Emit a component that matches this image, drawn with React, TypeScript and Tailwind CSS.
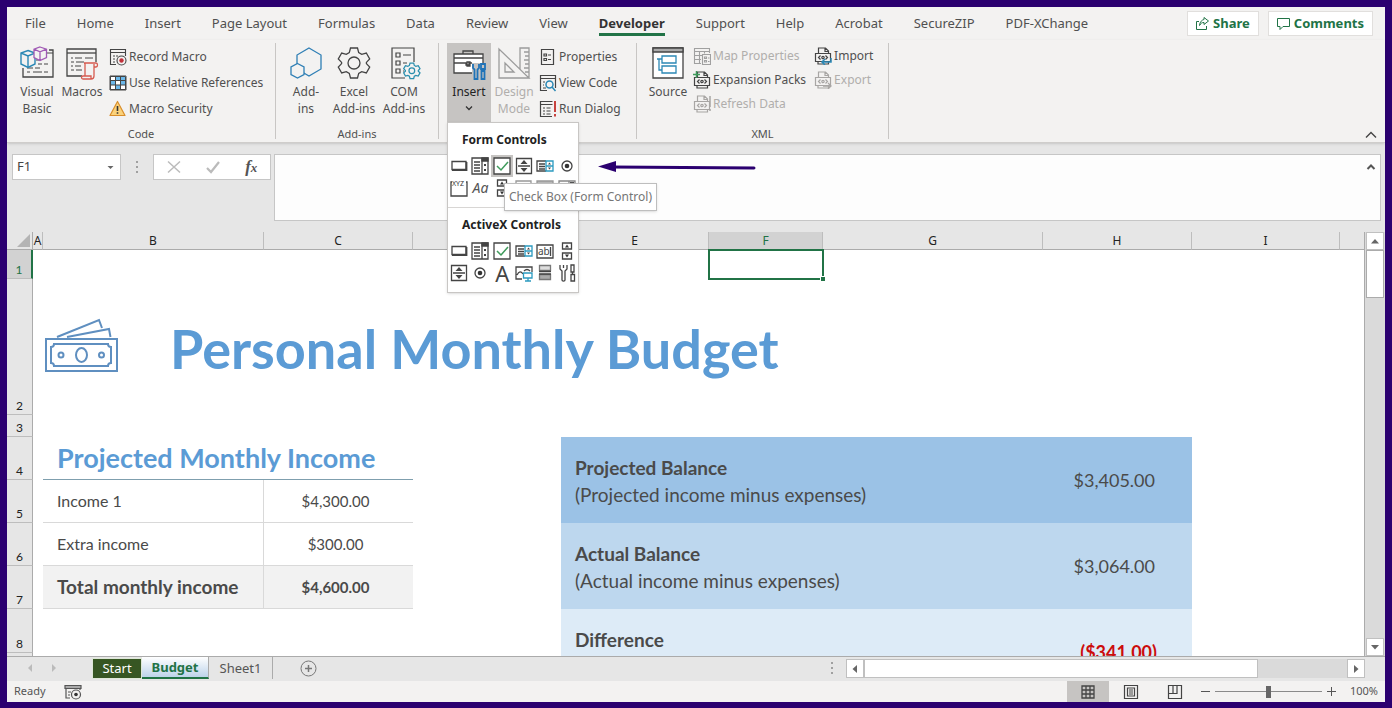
import { useState } from 'react';
import type { ReactNode } from 'react';

const tabs = [
  'File', 'Home', 'Insert', 'Page Layout', 'Formulas', 'Data', 'Review', 'View',
  'Developer', 'Support', 'Help', 'Acrobat', 'SecureZIP', 'PDF-XChange',
];

const columns = [
  { name: 'A', width: 'w-[10px]' },
  { name: 'B', width: 'w-[221px]' },
  { name: 'C', width: 'w-[149px]' },
  { name: 'D', width: 'w-[148px]' },
  { name: 'E', width: 'w-[148px]' },
  { name: 'F', width: 'w-[114px]' },
  { name: 'G', width: 'w-[220px]' },
  { name: 'H', width: 'w-[149px]' },
  { name: 'I', width: 'w-[148px]' },
  { name: '', width: '' },
];

/* ---------- ribbon icons ---------- */

function VisualBasicIcon() {
  return (
    <svg width="34" height="34" viewBox="0 0 34 34" fill="none" stroke="#444">
      <path d="M16 6h1M29 4h4v27H3V22" strokeWidth="1.3" />
      <path d="M27 7h6" strokeWidth="1" />
      <path d="M18 18h4M24 18h4M7 22h6M15 22h5M7 26h3M13 26h9M24 26h4M16 14h3" />
      <path d="M8 4.500l7 2.500v11l-7 3.500-7-3.500v-11zM1 7l7 3 7-3M8 10v11" stroke="#2b88b5" strokeWidth="1.400" fill="#f3f2f1" />
      <path d="M20 1l6.500 2.200v8.300L20 14.500l-6-3V3.200zM14 3.200l6 2.600 6.500-2.600M20 5.800v8.500" stroke="#a05ab5" strokeWidth="1.300" fill="#f3f2f1" />
    </svg>
  );
}

function MacrosIcon() {
  return (
    <svg width="34" height="34" viewBox="0 0 34 34" fill="none" stroke="#444">
      <path d="M17 30H2V3h29v13" strokeWidth="1.300" />
      <path d="M2 7h29" strokeWidth="1.300" />
      <path d="M6 12h2M10 12h7M20 12h8M6 16h3M11 16h8M6 20h2M10 20h6M6 24h3M11 24h6" />
      <path d="M19 17h12c2 0 2 4 0 4h-2v9c0 2-1 3-3 3H18c-2 0-2-3 0-3h2V18c0-1-.5-1-1-1zM29 21v-3M18 30h8v3" stroke="#d65a4f" strokeWidth="1.300" fill="#f3f2f1" />
    </svg>
  );
}

function RecordMacroIcon() {
  return (
    <svg width="18" height="18" viewBox="0 0 18 18" fill="none" stroke="#444" strokeWidth="1.100">
      <path d="M7 16.500H1.500v-15h15V8M1.500 4.500h15" />
      <path d="M4 8h2M7 8h2M4 11h2M4 14h2" />
      <circle cx="12.500" cy="12.500" r="4.500" />
      <circle cx="12.500" cy="12.500" r="2.200" fill="#c0303a" stroke="none" />
    </svg>
  );
}

function RelativeIcon() {
  return (
    <svg width="18" height="18" viewBox="0 0 18 18" fill="none" stroke="#444">
      <path d="M1 2h16v14H1z" fill="#fff" />
      <path d="M7 2h10v4H7zM1 6h5v5H1zM12 6h5v5h-5zM7 11h5v5H7z" fill="#6bb8ea" stroke="none" />
      <path d="M1.500 2.500h15v13h-15zM1.500 6.500h15M1.500 11h15M6.500 2.500v13M11.500 2.500v13" />
    </svg>
  );
}

function SecurityIcon() {
  return (
    <svg width="18" height="18" viewBox="0 0 18 18">
      <path d="M8.500 1.500L16 15.500H1z" fill="#fbd27a" stroke="#d98e2b" strokeWidth="1.200" strokeLinejoin="round" />
      <path d="M8.500 6v5M8.500 12.300v1.500" stroke="#333" strokeWidth="1.600" />
    </svg>
  );
}

function AddinsIcon() {
  return (
    <svg width="34" height="34" viewBox="0 0 34 34" fill="#f3f2f1" stroke="#2f7fb5" strokeWidth="1.300">
      <path d="M20 2l12 7v14l-12 7-12-7V9z" />
      <path d="M8.500 17.500l6.500 3.500v7.500L8.500 32 2 28.500V21z" />
    </svg>
  );
}

const gearPath =
  'M13.500 2h7l1.200 4.600 3 1.700 4.600-1.300 3.400 6-3.300 3.400v1.200l3.300 3.400-3.400 6-4.600-1.300-3 1.700L20.500 32h-7l-1.200-4.600-3-1.700L4.700 27l-3.400-6 3.300-3.400v-1.200L1.300 13l3.400-6 4.600 1.300 3-1.700z';

function ExcelAddinsIcon() {
  return (
    <svg width="34" height="34" viewBox="0 0 34 34" fill="none" stroke="#444" strokeWidth="1.300">
      <path d={gearPath} />
      <circle cx="17" cy="17" r="6" />
    </svg>
  );
}

function ComAddinsIcon() {
  return (
    <svg width="34" height="34" viewBox="0 0 34 34" fill="none" stroke="#444" strokeWidth="1.200">
      <path d="M18 32H5V2h22v14" />
      <path d="M9 7h4v4H9zM9 15h4v4H9zM9 23h4v4H9zM16 9h8M16 17h4M16 25h1" />
      <g transform="translate(16 16) scale(.52)" stroke="#2b8fae" strokeWidth="2.400" fill="#f3f2f1">
        <path d={gearPath} />
        <circle cx="17" cy="17" r="5.500" />
      </g>
    </svg>
  );
}

function ToolboxIcon() {
  return (
    <svg width="34" height="34" viewBox="0 0 34 34" fill="none" stroke="#444" strokeWidth="1.300">
      <path d="M20 27H2V8h29v9H20z" fill="#fff" stroke="none" />
      <path d="M20 27H2V8h29v10M11 8V5h10v3M2 12h29" />
      <path d="M2 17h12v2h3v-2h3M15 16h3v4h-3z" />
      <path d="M21 18v4l1.500 1.500V33h3v-9.500L27 22v-4M29 18h4v5h-4zM29.500 25h3v8h-3zM31 23v2" stroke="#1f73b8" strokeWidth="1.800" />
    </svg>
  );
}

function DesignIcon() {
  return (
    <svg width="34" height="34" viewBox="0 0 34 34" fill="none" stroke="#9c9c9c" strokeWidth="1.300">
      <path d="M23 23V2h9v30M32 32H2V3zM8 17v9h9zM27 6h5M28 10h4M27 14h5M28 18h4M27 22h5M28 26h4" />
    </svg>
  );
}

function PropertiesIcon() {
  return (
    <svg width="18" height="18" viewBox="0 0 18 18" fill="none" stroke="#444" strokeWidth="1.200">
      <path d="M2.500 1.500h12v15h-12z" />
      <path d="M5 6h2.500v2H5zM9 7h3M5 10.500h2.500v2H5zM9 11.500h3" />
    </svg>
  );
}

function ViewCodeIcon() {
  return (
    <svg width="18" height="18" viewBox="0 0 18 18" fill="none" stroke="#444" strokeWidth="1.200">
      <path d="M8 16.500H1.500v-15h15V14M1.500 4.500h15M4 8h2M4 11h1M4 14h3" />
      <circle cx="10.500" cy="10.500" r="3.500" stroke="#2b88b5" strokeWidth="1.500" />
      <path d="M13 13l3.500 4" stroke="#2b88b5" strokeWidth="1.500" />
    </svg>
  );
}

function RunDialogIcon() {
  return (
    <svg width="18" height="18" viewBox="0 0 18 18" fill="none" stroke="#444" strokeWidth="1.200">
      <path d="M13 16.500H1.500v-15h12M1.500 4.500h12M4 8h2M7.500 8h4M4 11h2M7.500 11h4M4 14h2M7.500 14h4" />
      <path d="M16 1v11M16 14v2.500" stroke="#c8433f" strokeWidth="2" />
    </svg>
  );
}

function SourceIcon() {
  return (
    <svg width="34" height="34" viewBox="0 0 34 34" fill="none" stroke="#444" strokeWidth="1.300">
      <path d="M2 2h30v30H2z" fill="#fff" />
      <path d="M2 2h30v4H2z" fill="#aaa" />
      <path d="M6 13h5M8 13v11h3M11 10h14v7H11zM11 20h14v7H11z" stroke="#2b88b5" />
    </svg>
  );
}

function MapIcon() {
  return (
    <svg width="18" height="18" viewBox="0 0 18 18" fill="none" stroke="#a0a0a0" strokeWidth="1.100">
      <path d="M8 16.500H1.500v-15h15V6M1.500 4.500h15M1.500 8.500H9M1.500 12.500H8M6.500 4.500v12M11.500 4.500v2" />
      <path d="M9.500 7.500h8v10h-8zM11.500 10h2v1.500h-2zM15 11h1.500M11.500 13.500h2V15h-2zM15 14.500h1.500" />
    </svg>
  );
}

interface XmlIconProps {
  color: string;
  children?: ReactNode;
}

// Page with an <o> badge on it, shared by the four XML file commands
function XmlIcon({ color, children }: XmlIconProps) {
  return (
    <svg width="18" height="18" viewBox="0 0 18 18" fill="none" stroke={color} strokeWidth="1.200">
      <path d="M4.500 6V1h7l3 3v2M11 1v3.500h3.500" />
      <path d="M1.500 6.500h15v8h-15zM4 14.500V17h10.500v-2" />
      <path d="M6.500 8.500L4.500 10.500l2 2M11.500 8.500l2 2-2 2" />
      <circle cx="9" cy="10.500" r="1.200" />
      {children}
    </svg>
  );
}

/* ---------- toolbox glyphs ---------- */

function Glyph({ children }: { children: ReactNode }) {
  return (
    <svg width="20" height="20" viewBox="0 0 20 20" fill="none" stroke="#444" strokeWidth="1.300">
      {children}
    </svg>
  );
}

const glyphs: Record<string, ReactNode> = {
  Button: (
    <Glyph>
      <path d="M3 5.500h14v8H3z" />
      <path d="M3 14h14.500V6" strokeWidth="1.800" />
    </Glyph>
  ),
  'Combo Box': (
    <Glyph>
      <path d="M2 2h16v16H2zM12 2v16M4 6h6M4 9h6M4 12h6M4 15h6" />
      <path d="M12 2h6v3h-6z" fill="#444" />
      <path d="M15 8v2M15 13v2" strokeWidth="2" />
    </Glyph>
  ),
  'Check Box': (
    <Glyph>
      <path d="M2 2h16v16H2z" fill="#fff" />
      <path d="M5 10l4 4 7-8" stroke="#3f9b5c" strokeWidth="1.500" />
    </Glyph>
  ),
  'Spin Button': (
    <Glyph>
      <path d="M2.500 2.500h15v15h-15zM4 10h12" />
      <path d="M10 4l3.500 4h-7zM10 16L6.500 12h7z" fill="#444" stroke="none" />
    </Glyph>
  ),
  'List Box': (
    <Glyph>
      <path d="M11 15H2V5h9M4 8h6M4 10.500h6M4 13h6" />
      <path d="M11 5h7v10h-7zM11 10h7" stroke="#2b9ac0" />
      <path d="M14.500 6.500l1.500 2h-3zM14.500 13.500l1.500-2h-3z" fill="#444" stroke="none" />
    </Glyph>
  ),
  'Option Button': (
    <Glyph>
      <circle cx="10" cy="10" r="5" />
      <circle cx="10" cy="10" r="2.300" fill="#333" stroke="none" />
    </Glyph>
  ),
  'Group Box': (
    <Glyph>
      <path d="M3 4H2v14h16V4h-1" />
      <text x="3" y="8" fontSize="7" fontFamily="Noto Sans, sans-serif" fill="#333" stroke="none">XYZ</text>
    </Glyph>
  ),
  Label: <span className="text-[14px] leading-5 italic text-[#555]">Aa</span>,
  'Scroll Bar': (
    <Glyph>
      <path d="M5.500 2h9v6h-9zM5.500 12h9v6h-9z" />
      <path d="M10 3.500l2 3H8zM10 16.500l-2-3h4z" fill="#333" stroke="none" />
    </Glyph>
  ),
  'Text Field': (
    <Glyph>
      <path d="M2 3h15v13H2z" stroke="#999" />
    </Glyph>
  ),
  'Combo List': (
    <Glyph>
      <path d="M2 3h16v13H2z" fill="#bbb" stroke="#999" />
    </Glyph>
  ),
  'Combo Drop-Down': (
    <Glyph>
      <path d="M2 3h16v13H2zM12 3v6" stroke="#888" />
      <path d="M13 4h4v3h-4z" fill="#555" stroke="none" />
    </Glyph>
  ),
  'Text Box': (
    <Glyph>
      <path d="M2 4h16v13H2z" />
      <text x="3" y="14" fontSize="10" fontFamily="Noto Sans, sans-serif" fill="#444" stroke="none">ab</text>
      <path d="M15.500 6v9" />
    </Glyph>
  ),
  'ActiveX Label': <span className="text-[22px] leading-5 text-[#444]">A</span>,
  Image: (
    <Glyph>
      <path d="M8 16H2V4h16v5M3 12c2-4 4-4 6-1M10 8c2-2 4-2 6 0" />
      <path d="M9.500 10h8.500v5H9.500zM14 15v3M11 18h6" stroke="#2b9ac0" fill="#fff" />
    </Glyph>
  ),
  'Toggle Button': (
    <Glyph>
      <path d="M4.500 2.500h11v5h-11z" fill="#ddd" stroke="#777" />
      <path d="M4.500 11.500h11v5h-11z" fill="#aaa" stroke="#777" />
      <path d="M4 8.500h12M4 11h12" strokeWidth="1.500" />
    </Glyph>
  ),
  'More Controls': (
    <Glyph>
      <path d="M3 2v4l2 2v9c0 1.500 3 1.500 3 0V8l2-2V2M6.500 2v3" />
      <path d="M14 2h3v7h-3zM14 11.500h3.500V18H14zM15.500 9v2.500" />
    </Glyph>
  ),
};

const formControls = [
  'Button', 'Combo Box', 'Check Box', 'Spin Button', 'List Box', 'Option Button',
  'Group Box', 'Label', 'Scroll Bar', 'Text Field', 'Combo List', 'Combo Drop-Down',
];

const activeXControls = [
  'Button', 'Combo Box', 'Check Box', 'List Box', 'Text Box', 'Scroll Bar',
  'Spin Button', 'Option Button', 'ActiveX Label', 'Image', 'Toggle Button', 'More Controls',
];

/* ---------- ribbon pieces ---------- */

interface BigButtonProps {
  icon: ReactNode;
  lines: string[];
  width: string;
  disabled?: boolean;
  active?: boolean;
}

function BigButton({ icon, lines, width, disabled, active }: BigButtonProps) {
  return (
    <button
      disabled={disabled}
      className={`${width} flex h-20 flex-col items-center pt-[3px] leading-[17px] ${
        disabled ? 'text-[#b0aeac]' : ''
      } ${active ? 'bg-[#c6c4c2] text-[#222]' : ''}`}
    >
      {icon}
      <span className="mt-[3px] whitespace-nowrap">{lines[0]}</span>
      {lines[1] && <span className="whitespace-nowrap">{lines[1]}</span>}
      {active && (
        <svg className="mt-1" width="8" height="8" viewBox="0 0 8 8" fill="none" stroke="#333" strokeWidth="1.300">
          <path d="M1 2.500l3 3 3-3" />
        </svg>
      )}
    </button>
  );
}

interface SmallButtonProps {
  icon: ReactNode;
  label: string;
  disabled?: boolean;
  compact?: boolean;
}

function SmallButton({ icon, label, disabled, compact }: SmallButtonProps) {
  return (
    <button
      disabled={disabled}
      className={`flex items-center gap-0.5 whitespace-nowrap ${compact ? 'h-6' : 'h-[26px]'} ${
        disabled ? 'text-[#b0aeac]' : ''
      }`}
    >
      {icon}
      {label}
    </button>
  );
}

interface GroupProps {
  title: string;
  width: string;
  children: ReactNode;
}

function Group({ title, width, children }: GroupProps) {
  return (
    <section aria-label={title || 'Controls'} className={`${width} flex h-24 shrink-0 flex-col border-r border-[#c8c6c4]`}>
      <div className="flex">{children}</div>
      <div className="mt-auto text-center text-[11px] leading-[10px]">{title}</div>
    </section>
  );
}

function ControlGrid({ items, hovered }: { items: string[]; hovered?: string }) {
  return (
    <div className="grid grid-cols-6">
      {items.map((item) => (
        <button
          key={item}
          aria-label={item}
          className={`flex h-[22px] items-center justify-center ${
            item === hovered ? 'bg-[#c6c4c2]' : ''
          }`}
        >
          {glyphs[item]}
        </button>
      ))}
    </div>
  );
}

function InsertMenu() {
  return (
    <div className="absolute top-[79px] left-0 z-20 w-[132px] border border-[#c8c6c4] bg-white shadow-sm">
      <h2 className="pt-1.5 pb-1 pl-3.5 text-[12px] leading-[22px] font-bold whitespace-nowrap text-[#222]">Form Controls</h2>
      <ControlGrid items={formControls} hovered="Check Box" />
      <h2 className="mt-2 border-t border-[#d8d6d4] pt-1.5 pb-1 pl-3.5 text-[12px] leading-[22px] font-bold whitespace-nowrap text-[#222]">
        ActiveX Controls
      </h2>
      <ControlGrid items={activeXControls} />
      <div className="h-2" />
      <div
        role="tooltip"
        className="absolute top-[60px] left-14 z-30 border border-[#bebebe] bg-white px-1 text-[12px] leading-[26px] whitespace-nowrap text-[#767676] shadow-sm"
      >
        Check Box (Form Control)
      </div>
      <svg className="absolute top-9 left-[150px]" width="158" height="16" viewBox="0 0 158 16">
        <path d="M14 8L156 9" stroke="#2b0070" strokeWidth="3" strokeLinecap="round" />
        <path d="M0 7.500L18 2v11z" fill="#2b0070" />
      </svg>
    </div>
  );
}

function Ribbon() {
  return (
    <div className="relative z-10 flex h-[103px] border-b border-[#cfcdcb] bg-[#f3f2f1] pt-[3px] text-[12px] text-[#505050] shadow">
      <Group title="Code" width="w-[269px]">
        <div className="w-2" />
        <BigButton icon={<VisualBasicIcon />} lines={['Visual', 'Basic']} width="w-11" />
        <BigButton icon={<MacrosIcon />} lines={['Macros']} width="w-[46px]" />
        <div className="flex flex-col pt-px pl-1">
          <SmallButton icon={<RecordMacroIcon />} label="Record Macro" />
          <SmallButton icon={<RelativeIcon />} label="Use Relative References" />
          <SmallButton icon={<SecurityIcon />} label="Macro Security" />
        </div>
      </Group>
      <Group title="Add-ins" width="w-[163px]">
        <div className="w-1.5" />
        <BigButton icon={<AddinsIcon />} lines={['Add-', 'ins']} width="w-12" />
        <BigButton icon={<ExcelAddinsIcon />} lines={['Excel', 'Add-ins']} width="w-12" />
        <BigButton icon={<ComAddinsIcon />} lines={['COM', 'Add-ins']} width="w-[52px]" />
      </Group>
      <Group title="" width="w-[198px]">
        <div className="w-2" />
        <div className="relative">
          <BigButton icon={<ToolboxIcon />} lines={['Insert']} width="w-11" active />
          <InsertMenu />
        </div>
        <BigButton icon={<DesignIcon />} lines={['Design', 'Mode']} width="w-[46px]" disabled />
        <div className="flex flex-col pt-px pl-0.5">
          <SmallButton icon={<PropertiesIcon />} label="Properties" />
          <SmallButton icon={<ViewCodeIcon />} label="View Code" />
          <SmallButton icon={<RunDialogIcon />} label="Run Dialog" />
        </div>
      </Group>
      <Group title="XML" width="w-[252px]">
        <div className="w-2" />
        <BigButton icon={<SourceIcon />} lines={['Source']} width="w-[46px]" />
        <div className="flex flex-col pt-px pl-0.5">
          <SmallButton compact disabled icon={<MapIcon />} label="Map Properties" />
          <SmallButton
            compact
            icon={
              <XmlIcon color="#444">
                <path d="M0 3.500h7M3.500 0v7" stroke="#3f9b5c" strokeWidth="1.500" />
              </XmlIcon>
            }
            label="Expansion Packs"
          />
          <SmallButton
            compact
            disabled
            icon={
              <XmlIcon color="#a8a6a4">
                <path d="M17 1v11M17 14v2" strokeWidth="1.500" />
              </XmlIcon>
            }
            label="Refresh Data"
          />
        </div>
        <div className="flex flex-col pt-px pl-2">
          <SmallButton
            compact
            icon={
              <XmlIcon color="#444">
                <path d="M17 11v4H8M11 12l-3 3 3 3" stroke="#2b88b5" strokeWidth="1.500" />
              </XmlIcon>
            }
            label="Import"
          />
          <SmallButton
            compact
            disabled
            icon={
              <XmlIcon color="#a8a6a4">
                <path d="M9 15h8M14 12l3 3-3 3" strokeWidth="1.300" />
              </XmlIcon>
            }
            label="Export"
          />
        </div>
      </Group>
      <button aria-label="Collapse the Ribbon" className="mt-auto mr-2 mb-[3px] ml-auto">
        <svg width="12" height="8" viewBox="0 0 12 8" fill="none" stroke="#444" strokeWidth="1.400">
          <path d="M1 6.500l5-5 5 5" />
        </svg>
      </button>
    </div>
  );
}

/* ---------- formula bar ---------- */

function Dots() {
  return (
    <svg width="4" height="14" viewBox="0 0 4 14" fill="#a0a0a0">
      <path d="M1 1h2v2H1zM1 6h2v2H1zM1 11h2v2H1z" />
    </svg>
  );
}

function FormulaBar() {
  const [cell, setCell] = useState('F1');
  const [formula, setFormula] = useState('');

  return (
    <div className="flex h-[89px] shrink-0 bg-[#e6e6e6] pt-[11px] pr-1 pl-[5px]">
      <div className="flex h-[26px] w-[109px] items-center border border-[#c6c6c6] bg-white">
        <input
          aria-label="Name Box"
          value={cell}
          onChange={(e) => setCell(e.target.value)}
          className="w-0 flex-1 pl-1 text-[13px] text-[#444] outline-none"
        />
        <button aria-label="Show names" className="px-1.5">
          <svg width="7" height="5" viewBox="0 0 7 5" fill="#666">
            <path d="M.5 1h6l-3 3z" />
          </svg>
        </button>
      </div>
      <div className="flex h-[26px] w-8 items-center justify-center">
        <Dots />
      </div>
      <div className="flex h-[26px] w-[118px] items-center justify-around border border-[#c6c6c6] bg-white">
        <button aria-label="Cancel">
          <svg width="14" height="14" viewBox="0 0 14 14" fill="none" stroke="#bbb" strokeWidth="1.500">
            <path d="M1 1.500l12 11M13 1.500l-12 11" />
          </svg>
        </button>
        <button aria-label="Enter">
          <svg width="14" height="14" viewBox="0 0 14 14" fill="none" stroke="#bbb" strokeWidth="2.200">
            <path d="M1 8l4 4 8-10" />
          </svg>
        </button>
        <button aria-label="Insert Function" className="font-['Liberation_Serif',serif] text-[17px] leading-5 font-bold text-[#555] italic">
          f<span className="text-[13px]">x</span>
        </button>
      </div>
      <div className="ml-[3px] flex h-[67px] flex-1 border border-[#c6c6c6] bg-[#fdfdfd]">
        <textarea
          aria-label="Formula Bar"
          value={formula}
          onChange={(e) => setFormula(e.target.value)}
          className="flex-1 resize-none px-2 py-1 outline-none"
        />
        <button aria-label="Collapse Formula Bar" className="mt-2 mr-1 self-start">
          <svg width="10" height="8" viewBox="0 0 10 8" fill="none" stroke="#555" strokeWidth="2">
            <path d="M1.500 6L5 2.500 8.500 6" />
          </svg>
        </button>
      </div>
    </div>
  );
}

/* ---------- worksheet ---------- */

function MoneyIcon() {
  return (
    <svg width="76" height="58" viewBox="0 0 76 58" fill="none" stroke="#5f8fc0" strokeWidth="2">
      <path d="M3 24h71v32H3z" />
      <path d="M11 29h54q0 3 3 3v16q-3 0-3 3H11q0-3-3-3V32q3 0 3-3z" />
      <ellipse cx="38.500" cy="40" rx="5.500" ry="7" />
      <circle cx="18" cy="40" r="2.500" />
      <circle cx="58.500" cy="40" r="2.500" />
      <path d="M14 22L56 5l3 8M24 22l42-8 1.500 8" />
    </svg>
  );
}

function RowHead({ n, height, selected }: { n?: number; height: string; selected?: boolean }) {
  return (
    <th
      scope="row"
      className={`${height} border-r border-b border-b-[#bdbdbd] p-0 text-center align-bottom text-[12px] leading-4 font-normal ${
        selected ? 'border-r-2 border-r-[#217346] bg-[#d2d2d2] text-[#217346]' : 'border-r-[#ababab] bg-[#e6e6e6] text-[#222]'
      }`}
    >
      {n}
    </th>
  );
}

function Balance({ title, note, color }: { title: string; note?: string; color: string }) {
  return (
    <td colSpan={3} rowSpan={2} className={`${color} h-[86px] p-0 pl-3.5 align-top`}>
      <div className="pt-[17px] text-[19px] leading-[27px]">
        <strong className="block">{title}</strong>
        {note}
      </div>
    </td>
  );
}

function Worksheet() {
  return (
    <div className="min-w-0 flex-1 overflow-hidden bg-white">
      <table className="w-full table-fixed border-separate border-spacing-0 font-['Lato',sans-serif] text-[#4a4a4a]">
        <thead>
          <tr className="h-[18px] bg-[#e6e6e6] font-['Noto_Sans',sans-serif] text-[12px] leading-4 text-[#222]">
            <th aria-label="Select all" className="w-[26px] border-r border-b border-[#ababab] p-0 pr-0.5">
              <svg className="ml-auto" width="13" height="13" viewBox="0 0 13 13" fill="#b4b4b4">
                <path d="M13 0v13H0z" />
              </svg>
            </th>
            {columns.map((col) => (
              <th
                key={col.name}
                scope="col"
                className={`${col.width} border-b p-0 font-normal ${
                  col.name === 'F'
                    ? 'border-b-[#217346] bg-[#d2d2d2] text-[#217346]'
                    : 'border-b-[#ababab]'
                } ${col.name ? 'border-r border-r-[#bdbdbd]' : ''}`}
              >
                {col.name}
              </th>
            ))}
          </tr>
        </thead>
        <tbody>
          <tr>
            <RowHead n={1} height="h-[29px]" selected />
            <td colSpan={5} />
            <td className="relative p-0">
              <div className="absolute -inset-px border-2 border-[#217346]">
                <div className="absolute -right-[3px] -bottom-[3px] size-[5px] border-t border-l border-white bg-[#217346]" />
              </div>
            </td>
            <td colSpan={4} />
          </tr>
          <tr>
            <RowHead n={2} height="h-[136px]" />
            <td colSpan={10} className="p-0 align-top">
              <div className="flex items-start gap-[51px] pt-9 pl-2.5">
                <MoneyIcon />
                <h1 className="text-[54px] leading-[68px] font-bold whitespace-nowrap text-[#5b9bd5]">Personal Monthly Budget</h1>
              </div>
            </td>
          </tr>
          <tr>
            <RowHead n={3} height="h-[22px]" />
            <td colSpan={10} />
          </tr>
          <tr>
            <RowHead n={4} height="h-[43px]" />
            <td />
            <td colSpan={2} className="border-b border-[#7f9fae] p-0 pl-3.5">
              <h2 className="text-[27px] leading-8 font-bold whitespace-nowrap text-[#5b9bd5]">Projected Monthly Income</h2>
            </td>
            <td />
            <Balance title="Projected Balance" note="(Projected income minus expenses)" color="bg-[#9bc2e6]" />
            <td rowSpan={2} className="bg-[#9bc2e6] pr-[37px] text-right text-[18px]">$3,405.00</td>
            <td colSpan={2} />
          </tr>
          <tr>
            <RowHead n={5} height="h-[43px]" />
            <td />
            <td className="border-r border-b border-[#d9d9d9] p-0 pl-3.5 text-[16px]">Income 1</td>
            <td className="border-b border-[#d9d9d9] p-0 pr-1.5 text-center text-[15px]">$4,300.00</td>
            <td />
            <td colSpan={2} />
          </tr>
          <tr>
            <RowHead n={6} height="h-[43px]" />
            <td />
            <td className="border-r border-b border-[#d9d9d9] p-0 pl-3.5 text-[16px]">Extra income</td>
            <td className="border-b border-[#d9d9d9] p-0 pr-1.5 text-center text-[15px]">$300.00</td>
            <td />
            <Balance title="Actual Balance" note="(Actual income minus expenses)" color="bg-[#bdd7ee]" />
            <td rowSpan={2} className="bg-[#bdd7ee] pr-[37px] text-right text-[18px]">$3,064.00</td>
            <td colSpan={2} />
          </tr>
          <tr className="font-bold">
            <RowHead n={7} height="h-[43px]" />
            <td />
            <td className="border-r border-b border-[#d9d9d9] bg-[#f2f2f2] p-0 pl-3.5 text-[19px] whitespace-nowrap">Total monthly income</td>
            <td className="border-b border-[#d9d9d9] bg-[#f2f2f2] p-0 pr-1.5 text-center text-[15px]">$4,600.00</td>
            <td />
            <td colSpan={2} />
          </tr>
          <tr>
            <RowHead n={8} height="h-[44px]" />
            <td colSpan={4} />
            <Balance title="Difference" color="bg-[#ddebf7]" />
            <td rowSpan={2} className="bg-[#ddebf7] pr-[35px] text-right text-[18px] font-bold text-[#cc0c0c]">($341.00)</td>
            <td colSpan={2} />
          </tr>
          <tr>
            <RowHead height="h-[42px]" />
            <td colSpan={4} />
            <td colSpan={2} />
          </tr>
        </tbody>
      </table>
    </div>
  );
}

function ScrollArrow({ label, d, className }: { label: string; d: string; className: string }) {
  return (
    <button aria-label={label} className={`${className} flex shrink-0 items-center justify-center border border-[#c0c0c0] bg-white`}>
      <svg width="10" height="10" viewBox="0 0 10 10" fill="#666">
        <path d={d} />
      </svg>
    </button>
  );
}

function VerticalScroll() {
  return (
    <div className="flex w-[21px] flex-col border-l border-[#ababab] bg-[#dadada] px-px">
      <ScrollArrow label="Scroll up" d="M5 3l4 4.500H1z" className="h-[18px]" />
      <div className="h-12 border border-[#ababab] bg-white" />
      <ScrollArrow label="Scroll down" d="M5 7.500L1 3h8z" className="mt-auto h-[18px]" />
    </div>
  );
}

function SheetTabs() {
  return (
    <div className="flex h-[25px] shrink-0 items-start border-t border-[#ababab] bg-[#e6e6e6] text-[13px]">
      <div className="flex h-[22px] w-[85px] items-center gap-4 pl-[19px]">
        <button aria-label="Previous sheet">
          <svg width="8" height="8" viewBox="0 0 8 8" fill="#bbb"><path d="M6 0v8L2 4z" /></svg>
        </button>
        <button aria-label="Next sheet">
          <svg width="8" height="8" viewBox="0 0 8 8" fill="#bbb"><path d="M2 0v8l4-4z" /></svg>
        </button>
      </div>
      <button className="mt-px h-[21px] w-[50px] border border-[#dfe8d8] bg-[#375623] leading-[17px] text-white">Start</button>
      <button className="h-[22px] w-[67px] border-r border-b-2 border-r-[#ababab] border-b-[#217346] bg-linear-to-b from-white to-[#bdd3ea] leading-5 font-bold text-[#217346]">
        Budget
      </button>
      <button className="h-[22px] w-16 border-r border-[#ababab] leading-5 text-[#555]">Sheet1</button>
      <button aria-label="New sheet" className="mt-[3px] ml-[27px]">
        <svg width="17" height="17" viewBox="0 0 17 17" fill="none" stroke="#777">
          <circle cx="8.500" cy="8.500" r="7.500" />
          <path d="M5 8.500h7M8.500 5v7" strokeWidth="1.500" />
        </svg>
      </button>
      <div className="mt-1 mr-3 ml-auto">
        <Dots />
      </div>
      <div className="mt-0.5 mr-5 flex h-[19px] w-[37.7%] bg-[#dadada]">
        <ScrollArrow label="Scroll left" d="M7 1v8L2.500 5z" className="w-[18px]" />
        <div className="w-[76%] border border-[#c0c0c0] bg-white" />
        <ScrollArrow label="Scroll right" d="M3 1v8l4.500-4z" className="ml-auto w-[18px]" />
      </div>
    </div>
  );
}

function StatusBar() {
  const [zoom, setZoom] = useState(100);

  return (
    <div className="flex h-[21px] shrink-0 items-center bg-[#f3f2f1] text-[11px] text-[#555]">
      <span className="pl-[7px]">Ready</span>
      <button aria-label="Record macro" className="ml-[18px]">
        <svg width="18" height="16" viewBox="0 0 18 16" fill="none" stroke="#555" strokeWidth="1.200">
          <path d="M6 14H2V2h14v4M4 8h3M4 11h2" />
          <path d="M1 1.500h16v3H1z" fill="#aaa" />
          <circle cx="12" cy="10.500" r="4.500" fill="#f3f2f1" />
          <circle cx="12" cy="10.500" r="1.800" fill="#333" stroke="none" />
        </svg>
      </button>
      <div className="ml-auto flex h-full">
        <button aria-label="Normal" className="flex w-[42px] items-center justify-center bg-[#c6c4c2]">
          <svg width="16" height="16" viewBox="0 0 16 16" fill="none" stroke="#444" strokeWidth="1.300">
            <path d="M2 2h12v12H2zM2 6h12M2 10h12M6 2v12M10 2v12" />
          </svg>
        </button>
        <button aria-label="Page Layout" className="flex w-11 items-center justify-center">
          <svg width="16" height="16" viewBox="0 0 16 16" fill="none" stroke="#444" strokeWidth="1.200">
            <path d="M1.500 1.500h13v13h-13zM4.500 4h7v8h-7zM6 6h4M6 8h4M6 10h4" />
          </svg>
        </button>
        <button aria-label="Page Break Preview" className="flex w-11 items-center justify-center">
          <svg width="16" height="16" viewBox="0 0 16 16" fill="none" stroke="#444" strokeWidth="1.200">
            <path d="M1.500 1.500h13v13h-13zM1.500 9.500H10v-8M6 1.500v8" />
          </svg>
        </button>
      </div>
      <button aria-label="Zoom out" className="ml-1" onClick={() => setZoom(zoom - 10)}>
        <svg width="9" height="9" viewBox="0 0 9 9" stroke="#555"><path d="M0 4.500h9" /></svg>
      </button>
      <input
        type="range"
        aria-label="Zoom"
        min={0}
        max={200}
        value={zoom}
        onChange={(e) => setZoom(Number(e.target.value))}
        className="mx-[5px] h-px w-[107px] appearance-none bg-[#8a8a8a] [&::-webkit-slider-thumb]:h-3 [&::-webkit-slider-thumb]:w-[5px] [&::-webkit-slider-thumb]:appearance-none [&::-webkit-slider-thumb]:bg-[#666]"
      />
      <button aria-label="Zoom in" onClick={() => setZoom(zoom + 10)}>
        <svg width="9" height="9" viewBox="0 0 9 9" stroke="#555"><path d="M0 4.500h9M4.500 0v9" /></svg>
      </button>
      <span className="ml-3.5 pr-[7px]">{zoom}%</span>
    </div>
  );
}

export default function App() {
  return (
    <div className="h-screen overflow-hidden bg-[#2b0070] px-[7px] pt-[7px] pb-1.5 font-['Noto_Sans','Open_Sans',sans-serif]">
      <div className="flex h-full flex-col">
        <header className="flex h-[33px] shrink-0 items-center bg-[#f3f2f1] pr-3 pl-[18px] text-[13px] text-[#505050]">
          <nav className="flex gap-[31px] whitespace-nowrap">
            {tabs.map((tab) => (
              <button
                key={tab}
                className={
                  tab === 'Developer'
                    ? 'border-b-[3px] border-[#217346] pt-[3px] font-bold text-[#333]'
                    : ''
                }
              >
                {tab}
              </button>
            ))}
          </nav>
          <div className="ml-auto flex gap-[9px] font-bold text-[#217346]">
            <button className="flex h-[25px] items-center gap-1 border border-[#e1dfdd] bg-white px-2">
              <svg width="13" height="13" viewBox="0 0 13 13" fill="none" stroke="#217346">
                <path d="M3 4.500H.5v8h10V9M8 .500L12.500 4 8 7.500V5.500C6 5.500 5 6 3.500 8.500 4 4.500 6 3 8 2.500z" />
              </svg>
              Share
            </button>
            <button className="flex h-[25px] items-center gap-1 border border-[#e1dfdd] bg-white px-2">
              <svg width="13" height="13" viewBox="0 0 13 13" fill="none" stroke="#217346">
                <path d="M.500 1.500h12v8H6l-3 3v-3H.500z" />
              </svg>
              Comments
            </button>
          </div>
        </header>
        <Ribbon />
        <FormulaBar />
        <main className="flex min-h-0 flex-1">
          <Worksheet />
          <VerticalScroll />
        </main>
        <SheetTabs />
        <StatusBar />
      </div>
    </div>
  );
}
